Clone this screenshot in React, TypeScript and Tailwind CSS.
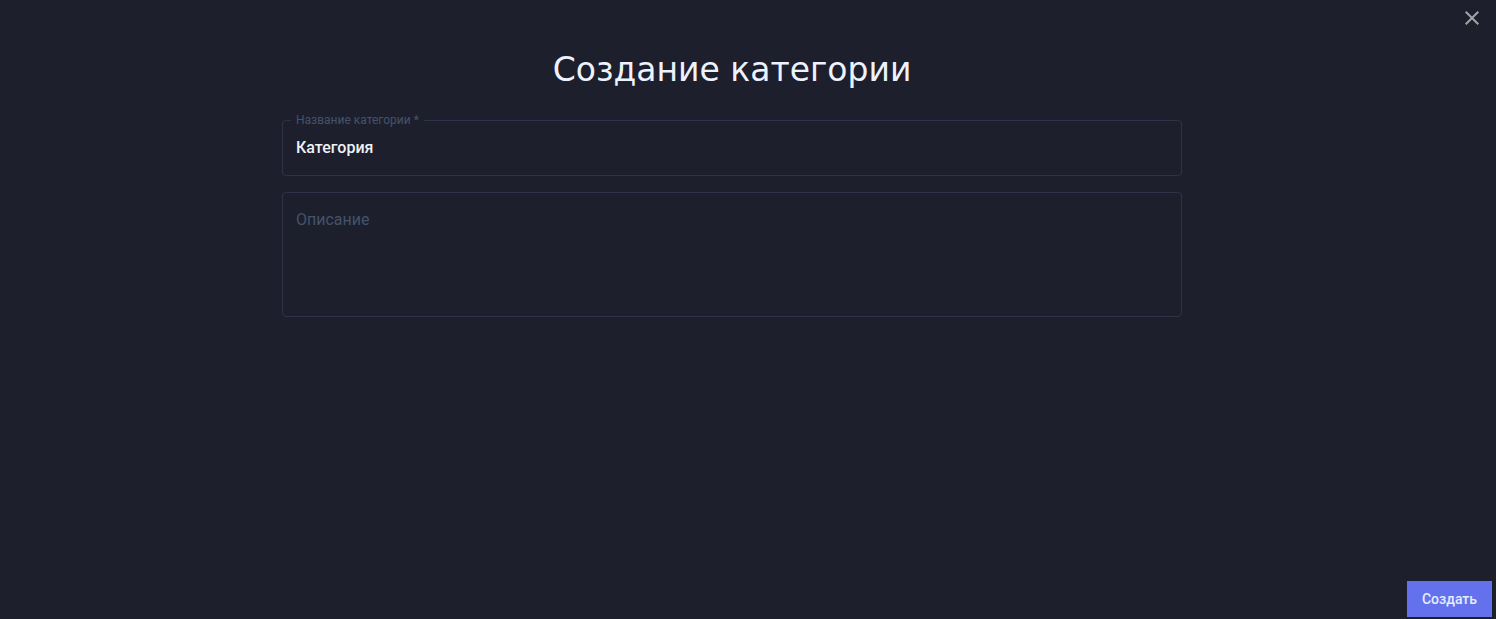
import React, { useState } from 'react';

interface FieldProps {
  id: string;
  value: string;
  onChange: (value: string) => void;
}

const CloseIcon = () => (
  <svg className="h-6 w-6" viewBox="0 0 24 24" fill="currentColor" aria-hidden="true">
    <path d="M19 6.41 17.59 5 12 10.59 6.41 5 5 6.41 10.59 12 5 17.59 6.41 19 12 13.41 17.59 19 19 17.59 13.41 12z" />
  </svg>
);

const NameField: React.FC<FieldProps> = ({ id, value, onChange }) => (
  <fieldset className="min-w-0 rounded border border-[#303247] px-2">
    <legend className="px-[5px] text-xs leading-3 text-[#43536b]">
      <label htmlFor={id}>Название категории *</label>
    </legend>
    <input
      id={id}
      type="text"
      required
      value={value}
      onChange={(e) => onChange(e.target.value)}
      className="mt-[10px] mb-[15px] block h-6 w-full bg-transparent px-[5px] text-base font-medium text-[#edf2f7] outline-none"
    />
  </fieldset>
);

const DescriptionField: React.FC<FieldProps> = ({ id, value, onChange }) => (
  <div className="relative rounded border border-[#303247] px-[13px] py-[15px]">
    {/* The label sits where the text starts and hides once something is typed */}
    <label
      htmlFor={id}
      className={`pointer-events-none absolute top-[15px] left-[13px] text-base leading-6 text-[#43536b] ${value ? 'opacity-0' : ''}`}
    >
      Описание
    </label>
    <textarea
      id={id}
      rows={4}
      value={value}
      onChange={(e) => onChange(e.target.value)}
      className="block h-[93px] w-full resize-none bg-transparent text-base leading-6 text-[#edf2f7] outline-none"
    />
  </div>
);

const App: React.FC = () => {
  const [name, setName] = useState('Категория');
  const [description, setDescription] = useState('');

  return (
    <form
      onSubmit={(e) => e.preventDefault()}
      className="flex min-h-screen flex-col bg-[#1e1f2d] font-['Roboto',sans-serif]"
    >
      <header className="flex justify-end px-3 pt-[6px]">
        <button type="button" aria-label="Закрыть" className="text-[#a3a3a5]">
          <CloseIcon />
        </button>
      </header>

      <main className="grow pt-[18px] pr-12 pl-4">
        <div className="mx-auto flex max-w-[900px] flex-col">
          <h1 className="mb-[22px] text-center font-['DejaVu_Sans',sans-serif] text-[33px] leading-[44px] text-[#edf2ff]">
            Создание категории
          </h1>
          <div className="flex flex-col gap-4">
            <NameField id="category-name" value={name} onChange={setName} />
            <DescriptionField id="category-description" value={description} onChange={setDescription} />
          </div>
        </div>
      </main>

      <footer className="flex justify-end px-1 pb-[2px]">
        <button
          type="submit"
          className="h-9 bg-[#6372ec] px-[15px] text-sm font-medium text-[#e6ecff]"
        >
          Создать
        </button>
      </footer>
    </form>
  );
};

export default App;
